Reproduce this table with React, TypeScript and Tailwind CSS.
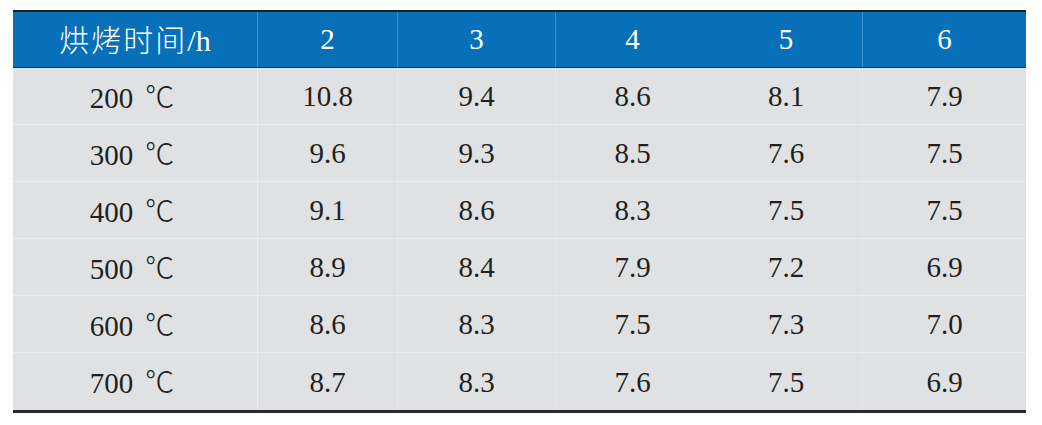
import React from "react";

const headers = ["烘烤时间/h", "2", "3", "4", "5", "6"];
const rows = [
  ["200 ℃", "10.8", "9.4", "8.6", "8.1", "7.9"],
  ["300 ℃", "9.6", "9.3", "8.5", "7.6", "7.5"],
  ["400 ℃", "9.1", "8.6", "8.3", "7.5", "7.5"],
  ["500 ℃", "8.9", "8.4", "7.9", "7.2", "6.9"],
  ["600 ℃", "8.6", "8.3", "7.5", "7.3", "7.0"],
  ["700 ℃", "8.7", "8.3", "7.6", "7.5", "6.9"],
];

const headBorders = [
  "border-r border-[#3d8fcf]",
  "border-r border-[#3d8fcf]",
  "border-r border-[#3d8fcf]",
  "border-r border-transparent",
  "border-r border-[#3d8fcf]",
  "",
];
const bodyBorders = [
  "border-r border-[#ebecee]",
  "border-r border-[#e6e7e9]",
  "border-r border-[#e6e7e9]",
  "border-r border-[#e2e3e5]",
  "border-r border-[#e6e7e9]",
  "",
];

export default function App() {
  return (
    <div className="w-[1042px] h-[425px] bg-white pt-[10px] pl-[13px] font-['Liberation_Serif','Tinos','Times_New_Roman','DejaVu_Serif','Noto_Sans_CJK_SC',serif]">
      <div className="w-[1013px] border-t-[2px] border-[#1e1f22] border-b-[3px] border-b-[#2a2a2c]">
        <div className="grid grid-cols-[245px_140px_158px_154px_153px_163px] h-[56px] bg-[#0870b9] border-b border-[#17324c] text-white text-[29px]">
          {headers.map((h, i) => (
            <div key={i} className={`flex items-center justify-center ${headBorders[i]}`}>
              {i === 0 ? (
                <span>
                  <span className="tracking-[2px] text-[30px] font-light font-['Noto_Sans_CJK_SC',sans-serif]">烘烤时间</span>
                  <span className="text-[30px]">/h</span>
                </span>
              ) : (
                h
              )}
            </div>
          ))}
        </div>
        {rows.map((r, ri) => (
          <div
            key={ri}
            className={`grid grid-cols-[245px_140px_158px_154px_153px_163px] h-[57px] bg-[#e0e1e3] text-[#231f20] text-[29px] ${ri < rows.length - 1 ? "border-b border-[#ececee]" : ""}`}
          >
            {r.map((c, ci) => (
              <div key={ci} className={`flex items-center justify-center pt-[2px] ${bodyBorders[ci]}`}>
                {ci === 0 ? (
                  <span className="-ml-[6px]">
                    {c.split(" ")[0]}
                    <span className="ml-[12px] font-['Noto_Sans_CJK_SC',sans-serif] font-light">℃</span>
                  </span>
                ) : (
                  c
                )}
              </div>
            ))}
          </div>
        ))}
      </div>
    </div>
  );
}
